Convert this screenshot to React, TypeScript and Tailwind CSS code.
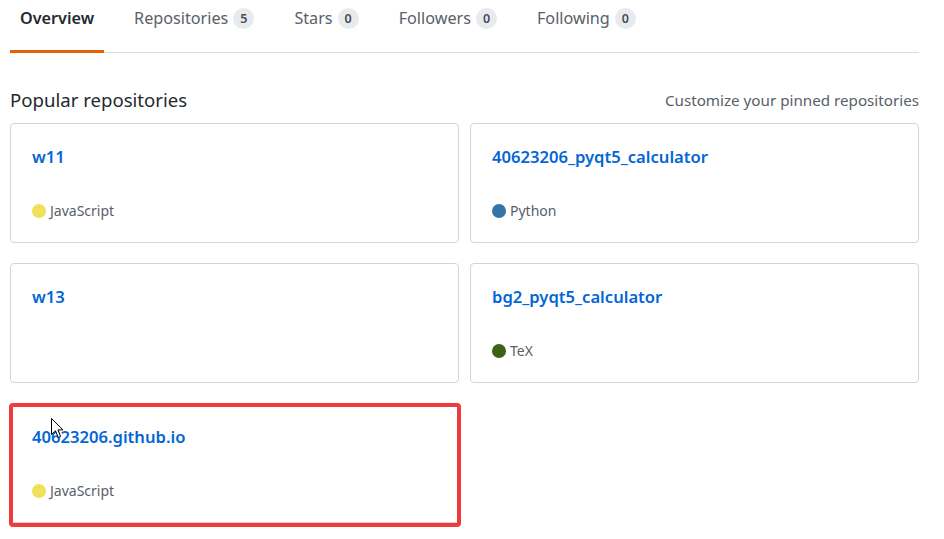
import React from "react";

type Repo = {
  name: string;
  lang?: string;
  color?: string;
  highlight?: boolean;
};

const tabs = [
  { label: "Overview", active: true },
  { label: "Repositories", count: 5 },
  { label: "Stars", count: 0 },
  { label: "Followers", count: 0 },
  { label: "Following", count: 0 },
];

const repos: Repo[] = [
  { name: "w11", lang: "JavaScript", color: "bg-[#f1e05a]" },
  { name: "40623206_pyqt5_calculator", lang: "Python", color: "bg-[#3572a5]" },
  { name: "w13" },
  { name: "bg2_pyqt5_calculator", lang: "TeX", color: "bg-[#3d6117]" },
  { name: "40623206.github.io", lang: "JavaScript", color: "bg-[#f1e05a]", highlight: true },
];

function Cursor() {
  return (
    <svg width="13" height="21" viewBox="0 0 13 21" className="absolute left-[51px] top-[418px]">
      <path
        d="M0.5 0.5 L0.5 16.5 L4.5 12.8 L7.2 19.5 L9.6 18.5 L7 11.9 L12 11.9 Z"
        fill="#fff"
        stroke="#000"
        strokeWidth="1"
        strokeLinejoin="round"
      />
    </svg>
  );
}

export default function App() {
  return (
    <div
      className="relative w-[944px] h-[539px] overflow-hidden bg-white text-[#24292e]"
      style={{ fontFamily: '"Noto Sans", "Open Sans", sans-serif' }}
    >
      <div className="ml-[10px] w-[909px]">
        {/* Tabs */}
        <nav className="flex gap-5 border-b border-[#d8dde3]">
          {tabs.map((tab) =>
            tab.active ? (
              <div
                key={tab.label}
                className="flex items-start px-[10px] pt-[6px] pb-[20px] -mb-px border-b-[3px] border-[#e36209] text-[16.2px] leading-6 font-semibold text-[#24292e]"
              >
                {tab.label}
              </div>
            ) : (
              <div
                key={tab.label}
                className="flex items-start gap-[5px] px-[10px] pt-[6px] pb-[22px] text-[16.2px] leading-6 text-[#586069]"
              >
                {tab.label}
                <span className="mt-[2px] flex items-center justify-center min-w-[21px] h-[21px] px-[6px] rounded-full bg-[#e8eaed] text-[12.5px] font-semibold text-[#444d56]">
                  {tab.count}
                </span>
              </div>
            )
          )}
        </nav>

        {/* Header */}
        <div className="flex items-center justify-between mt-[35px] mb-[11px] h-6">
          <h2 className="text-[18.6px] leading-6 text-[#24292e]">Popular repositories</h2>
          <span className="text-[15.2px] text-[#586069]">Customize your pinned repositories</span>
        </div>

        {/* Pinned cards */}
        <div className="grid grid-cols-[449px_449px] gap-x-[11px] gap-y-5">
          {repos.map((repo) => (
            <div
              key={repo.name}
              className="relative flex flex-col justify-between h-[120px] p-[21px] border border-[#d1d5da] rounded-[4px]"
            >
              <span className="text-[16.6px] leading-6 font-semibold text-[#0366d6]">{repo.name}</span>
              <span className="flex items-center gap-1 h-5 text-sm text-[#586069]">
                {repo.lang && (
                  <>
                    <span className={`w-[14px] h-[14px] rounded-full ${repo.color}`} />
                    {repo.lang}
                  </>
                )}
              </span>
              {repo.highlight && (
                <div className="absolute -left-[2px] -top-px w-[452px] h-[124px] border-4 border-[#ef3b3b] rounded-[4px] pointer-events-none" />
              )}
            </div>
          ))}
        </div>
      </div>
      <Cursor />
    </div>
  );
}
